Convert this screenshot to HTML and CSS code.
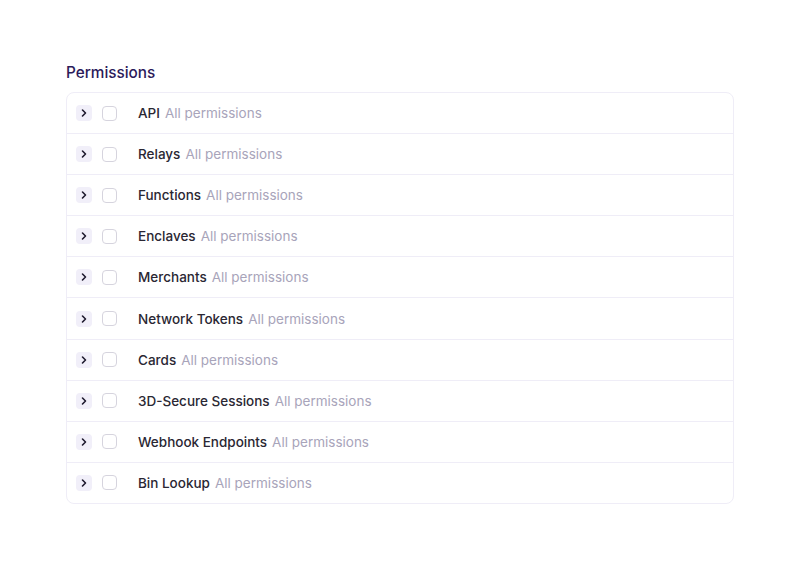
FILE: index.html
```html
<!DOCTYPE html>
<html lang="en">
<head>
  <meta charset="UTF-8">
  <title>Permissions</title>
  <link rel="stylesheet" href="styles.css">
</head>
<body>
  <div class="page">
    <h2 class="title">Permissions</h2>
    <div class="perm-list">
      <div class="perm-row"><span class="toggle"><svg viewBox="0 0 16 16"><path d="M6.5 5 L9.5 8 L6.5 11"/></svg></span><span class="check"></span><span class="name">API</span><span class="scope">All permissions</span></div>
      <div class="perm-row"><span class="toggle"><svg viewBox="0 0 16 16"><path d="M6.5 5 L9.5 8 L6.5 11"/></svg></span><span class="check"></span><span class="name">Relays</span><span class="scope">All permissions</span></div>
      <div class="perm-row"><span class="toggle"><svg viewBox="0 0 16 16"><path d="M6.5 5 L9.5 8 L6.5 11"/></svg></span><span class="check"></span><span class="name">Functions</span><span class="scope">All permissions</span></div>
      <div class="perm-row"><span class="toggle"><svg viewBox="0 0 16 16"><path d="M6.5 5 L9.5 8 L6.5 11"/></svg></span><span class="check"></span><span class="name">Enclaves</span><span class="scope">All permissions</span></div>
      <div class="perm-row"><span class="toggle"><svg viewBox="0 0 16 16"><path d="M6.5 5 L9.5 8 L6.5 11"/></svg></span><span class="check"></span><span class="name">Merchants</span><span class="scope">All permissions</span></div>
      <div class="perm-row"><span class="toggle"><svg viewBox="0 0 16 16"><path d="M6.5 5 L9.5 8 L6.5 11"/></svg></span><span class="check"></span><span class="name">Network Tokens</span><span class="scope">All permissions</span></div>
      <div class="perm-row"><span class="toggle"><svg viewBox="0 0 16 16"><path d="M6.5 5 L9.5 8 L6.5 11"/></svg></span><span class="check"></span><span class="name">Cards</span><span class="scope">All permissions</span></div>
      <div class="perm-row"><span class="toggle"><svg viewBox="0 0 16 16"><path d="M6.5 5 L9.5 8 L6.5 11"/></svg></span><span class="check"></span><span class="name">3D-Secure Sessions</span><span class="scope">All permissions</span></div>
      <div class="perm-row"><span class="toggle"><svg viewBox="0 0 16 16"><path d="M6.5 5 L9.5 8 L6.5 11"/></svg></span><span class="check"></span><span class="name">Webhook Endpoints</span><span class="scope">All permissions</span></div>
      <div class="perm-row"><span class="toggle"><svg viewBox="0 0 16 16"><path d="M6.5 5 L9.5 8 L6.5 11"/></svg></span><span class="check"></span><span class="name">Bin Lookup</span><span class="scope">All permissions</span></div>
    </div>
  </div>
</body>
</html>
```

FILE: styles.css
```css
body {
  margin: 0;
  padding: 0;
  background: #fff;
  font-family: Inter, "Noto Sans", sans-serif;
}

.page {
  padding: 62px 66px 0 66px;
}

.title {
  margin: 0 0 9px 0;
  font-size: 15.3px;
  font-weight: 500;
  line-height: 21px;
  color: #2b1a5a;
}

/* list card */

.perm-list {
  border: 1px solid #efedf7;
  border-radius: 8px;
  width: 668px;
  box-sizing: border-box;
}

.perm-row {
  display: flex;
  align-items: center;
  height: 41.1px;
  box-sizing: border-box;
  padding-left: 9px;
  border-top: 1px solid #efedf7;
  font-size: 13.5px;
}
.perm-row:first-child {
  border-top: none;
  height: 40.1px;
}

.toggle {
  width: 16px;
  height: 16px;
  border-radius: 4px;
  background: #f1eff9;
  display: flex;
  align-items: center;
  justify-content: center;
}
.toggle svg {
  width: 16px;
  height: 16px;
  fill: none;
  stroke: #1f1b2e;
  stroke-width: 1.6;
  stroke-linecap: round;
  stroke-linejoin: round;
}

.check {
  width: 13px;
  height: 13px;
  margin-left: 10px;
  border: 1px solid #d6d4de;
  border-radius: 4px;
  background: #fff;
}

.name {
  margin-left: 21px;
  color: #2a2733;
  font-weight: 500;
}

.scope {
  margin-left: 5px;
  color: #a8a4ba;
}
```
